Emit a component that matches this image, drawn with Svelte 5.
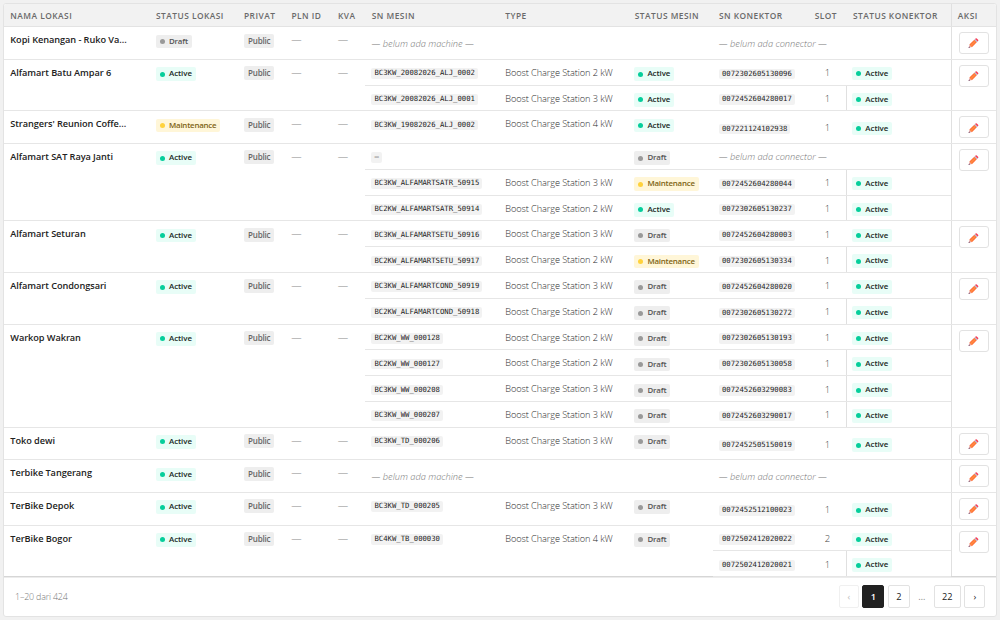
<script>
  const boost = (n) => `Boost Charge Station ${n} kW`;
  const m = (sn, kw, status, ...connectors) => ({ sn, type: kw ? boost(kw) : '', status, connectors });
  const c = (sn, slot = 1) => ({ sn, slot, status: 'Active' });

  const locations = [
    { name: 'Kopi Kenangan - Ruko Va...', status: 'Draft', machines: [] },
    { name: 'Alfamart Batu Ampar 6', status: 'Active', machines: [
      m('BC3KW_20082026_ALJ_0002', 2, 'Active', c('0072302605130096')),
      m('BC3KW_20082026_ALJ_0001', 3, 'Active', c('0072452604280017')) ] },
    { name: "Strangers' Reunion Coffe...", status: 'Maintenance', machines: [
      m('BC3KW_19082026_ALJ_0002', 4, 'Active', c('007221124102938')) ] },
    { name: 'Alfamart SAT Raya Janti', status: 'Active', machines: [
      m('—', 0, 'Draft'),
      m('BC3KW_ALFAMARTSATR_50915', 3, 'Maintenance', c('0072452604280044')),
      m('BC2KW_ALFAMARTSATR_50914', 2, 'Active', c('0072302605130237')) ] },
    { name: 'Alfamart Seturan', status: 'Active', machines: [
      m('BC3KW_ALFAMARTSETU_50916', 3, 'Draft', c('0072452604280003')),
      m('BC2KW_ALFAMARTSETU_50917', 2, 'Maintenance', c('0072302605130334')) ] },
    { name: 'Alfamart Condongsari', status: 'Active', machines: [
      m('BC3KW_ALFAMARTCOND_50919', 3, 'Draft', c('0072452604280020')),
      m('BC2KW_ALFAMARTCOND_50918', 2, 'Draft', c('0072302605130272')) ] },
    { name: 'Warkop Wakran', status: 'Active', machines: [
      m('BC2KW_WW_000128', 2, 'Draft', c('0072302605130193')),
      m('BC2KW_WW_000127', 2, 'Draft', c('0072302605130058')),
      m('BC3KW_WW_000208', 3, 'Draft', c('0072452603290083')),
      m('BC3KW_WW_000207', 3, 'Draft', c('0072452603290017')) ] },
    { name: 'Toko dewi', status: 'Active', machines: [
      m('BC3KW_TD_000206', 3, 'Draft', c('0072452505150019')) ] },
    { name: 'Terbike Tangerang', status: 'Active', machines: [] },
    { name: 'TerBike Depok', status: 'Active', machines: [
      m('BC3KW_TD_000205', 3, 'Draft', c('0072452512100023')) ] },
    { name: 'TerBike Bogor', status: 'Active', machines: [
      m('BC4KW_TB_000030', 4, 'Draft', c('0072502412020022', 2), c('0072502412020021')) ] }
  ];

  const ROW = 25.8;
  const rowsOf = (loc) => loc.machines.reduce((n, mac) => n + Math.max(1, mac.connectors.length), 0);
  const heightOf = (loc) => Math.max(32.6, rowsOf(loc) * ROW);
</script>

{#snippet badge(status)}
  <span class="badge {status.toLowerCase()}"><i></i><span>{status}</span></span>
{/snippet}

<main class="card">
  <div class="grid head">
    <div>NAMA LOKASI</div>
    <div>STATUS LOKASI</div>
    <div>PRIVAT</div>
    <div>PLN ID</div>
    <div>KVA</div>
    <div>SN MESIN</div>
    <div>TYPE</div>
    <div>STATUS MESIN</div>
    <div>SN KONEKTOR</div>
    <div class="slot-head">SLOT</div>
    <div>STATUS KONEKTOR</div>
    <div class="aksi">AKSI</div>
  </div>

  {#each locations as loc}
    <section class="loc" style="height: {heightOf(loc)}px">
      <div class="name">{loc.name}</div>
      <div class="lstat">{@render badge(loc.status)}</div>
      <div class="priv"><span>Public</span></div>
      <div class="dash pln">—</div>
      <div class="dash kva">—</div>
      <div class="machines" style="height: {heightOf(loc)}px">
        {#each loc.machines as mac, mi}
          <div class="machine">
            <div class="sn"><code>{mac.sn}</code></div>
            <div class="type">{mac.type}</div>
            <div class="mstat">{@render badge(mac.status)}</div>
            <div class="conns">
              {#each mac.connectors as con, ci}
                <div class="conn" class:sub={mi + ci > 0}>
                  <div class="csn"><code>{con.sn}</code></div>
                  <div class="slot">{con.slot}</div>
                  <div class="cstat">{@render badge(con.status)}</div>
                </div>
              {:else}
                <div class="conn"><em>— belum ada connector —</em></div>
              {/each}
            </div>
          </div>
        {:else}
          <div class="machine">
            <em class="nomachine">— belum ada machine —</em>
            <div class="conns"><div class="conn"><em>— belum ada connector —</em></div></div>
          </div>
        {/each}
      </div>
      <div class="action">
        <button aria-label="Edit">
          <svg viewBox="0 0 20 20">
            <path d="M1 19l2-6 4 4z" fill="#e9a9a5" />
            <path d="M1 19l1-3 2 2z" fill="#654a70" />
            <path d="M2.6 12.6L12 3.2l4.8 4.8L7.4 17.4z" fill="#ff6f38" />
            <path d="M4 14L13.4 4.6l2 2-9.4 9.4z" fill="#ff8a40" />
            <path d="M12 3.2l1.5-1.5 4.8 4.8L16.8 8z" fill="#a9b4d0" />
            <path d="M13.5 1.7l.9-.9q1.2-1.1 2.4 0l2.4 2.4q1.1 1.2 0 2.4l-.9.9z" fill="#f83f58" />
          </svg>
        </button>
      </div>
    </section>
  {/each}

  <footer>
    <span class="count">1–20 dari 424</span>
    <nav>
      <button class="prev">‹</button>
      <button class="current">1</button>
      <button class="two">2</button>
      <span>…</span>
      <button class="last">22</button>
      <button class="next">›</button>
    </nav>
  </footer>
</main>

<style>
  :global(body) { background: #f1f1f1; }
  * { box-sizing: border-box; }
  .card {
    width: 993.5px; height: 614px; margin: 3px 0 0 3px;
    background: #fff; border: 1px solid #e3e3e3; border-radius: 3px;
    font-family: 'Open Sans', 'Noto Sans', sans-serif; font-size: 8.4px; line-height: 12px;
    color: #222; overflow: hidden; display: flex; flex-direction: column;
  }
  .grid {
    display: grid;
    grid-template-columns: 145.7px 88px 47.5px 46.5px 33.8px 133.5px 129.5px 84.2px 88px 46px 104.7px 1fr;
  }
  .head {
    height: 23.2px; flex: none; background: #f2f2f2; border-bottom: 1px solid #e3e3e3;
    color: #6a6a6a; font-size: 8.4px; font-weight: 600; letter-spacing: 0.47px; align-items: center; white-space: nowrap;
  }
  .head > div { padding: 1px 0 0 6.3px; }
  .head > .slot-head { padding-left: 14px; }
  .head > .aksi { height: 100%; border-left: 1px solid #e0e0e0; padding-top: 6px; padding-left: 5.5px; }
  .loc { display: flex; flex: none; border-bottom: 1px solid #e6e6e6; }
  .loc:last-of-type { border-bottom-color: #d6d6d6; }
  .name { width: 145.7px; padding: 7px 0 0 6.3px; font-weight: 600; font-size: 9.2px; letter-spacing: -0.06px; white-space: nowrap; }
  .lstat { width: 88px; padding: 7.5px 0 0 6.3px; }
  .priv { width: 47.5px; padding: 6.4px 0 0 6.5px; }
  .priv span {
    display: block; width: 30px; height: 14px; line-height: 13.5px; border-radius: 2px; background: #eee;
    color: #666; font-size: 8px; font-weight: 600; text-align: center; letter-spacing: -0.2px;
  }
  .dash { color: #888; font-size: 10.4px; font-weight: 300; padding: 7px 0 0 6px; }
  .pln { width: 46.5px; }
  .kva { width: 33.8px; }
  .machines { width: 585.9px; flex: none; display: flex; flex-direction: column; }
  .machine { display: flex; flex: 1 0 auto; }
  .machine:not(:last-child) { background: linear-gradient(#e6e6e6, #e6e6e6) bottom / 100% 1px no-repeat; }
  .sn { width: 133.5px; padding: 8.4px 0 0 6px; }
  code {
    display: block; width: max-content; height: 10.6px; line-height: 10.6px; padding: 0 3px; border-radius: 2px;
    background: #f2f2f2; color: #1c1c1c; font-family: 'DejaVu Sans Mono', monospace; font-size: 7.25px;
  }
  .type { width: 129.5px; padding: 7px 0 0 6.3px; font-weight: 300; font-size: 9.2px; letter-spacing: -0.09px; color: #2c2c2c; white-space: nowrap; }
  .mstat { width: 84.2px; padding: 7.5px 0 0 5.9px; }
  .conns { width: 238.7px; display: flex; flex-direction: column; }
  .conn { display: flex; flex: 1 0 25.8px; align-items: center; background: #fff; border-bottom: 1px solid #e6e6e6; }
  .csn { width: 88px; padding: 3.4px 0 0 6.3px; }
  .slot { width: 45.8px; padding: 2px 0 0 24px; font-weight: 300; font-size: 9.5px; color: #444; }
  .cstat { flex: 1; align-self: stretch; display: flex; align-items: center; padding: 3px 0 0 5.9px; }
  .sub .cstat { border-left: 1px solid #e0e0e0; padding-left: 4.9px; }
  em { font-weight: 300; font-size: 9.25px; color: #777; padding: 2px 0 0 6.1px; white-space: nowrap; }
  .nomachine { width: 347.2px; align-self: center; padding-top: 1px; }
  .badge {
    display: flex; width: max-content; height: 13.5px; align-items: center; gap: 4px; padding: 0 4px; border-radius: 2px;
    font-size: 7.9px; font-weight: 600; line-height: 13.5px;
  }
  .badge i { width: 5px; height: 5px; border-radius: 50%; background: currentColor; }
  .active { background: #e8fdf7; color: #1c2925; letter-spacing: -0.05px; }
  .active i { background: #06ce9b; }
  .draft { background: #eee; color: #555; letter-spacing: -0.15px; }
  .draft i { background: #999; }
  .maintenance { background: #fff6d8; color: #806414; letter-spacing: -0.22px; }
  .maintenance i { background: #ffd23c; }
  .action { flex: 1; border-left: 1px solid #e0e0e0; padding: 5px 0 0 6.2px; }
  button { font: inherit; background: #fff; border: 1px solid #e2e2e2; border-radius: 3px; padding: 0; color: #222; display: flex; align-items: center; justify-content: center; }
  .action button { width: 30px; height: 22px; }
  .action svg { width: 10.5px; height: 10.5px; margin-top: 1px; }
  footer { flex: 1; display: flex; align-items: center; justify-content: space-between; padding: 0 10.2px 1px 11px; border-top: 1px solid #ececec; }
  .count { color: #777; font-size: 8.9px; font-weight: 300; letter-spacing: -0.18px; padding-top: 1px; }
  nav { display: flex; align-items: center; gap: 3.5px; font-size: 9.2px; }
  nav button { height: 23px; border-radius: 2px; width: 21px; padding-top: 1px; }
  nav span { width: 17px; text-align: center; color: #888; }
  nav .prev { width: 20px; color: #bbb; border-color: #f0f0f0; }
  nav .current { width: 22px; background: #212121; border-color: #212121; color: #fff; font-weight: 600; }
  nav .two { width: 22px; }
  nav .last { width: 27px; }
</style>
